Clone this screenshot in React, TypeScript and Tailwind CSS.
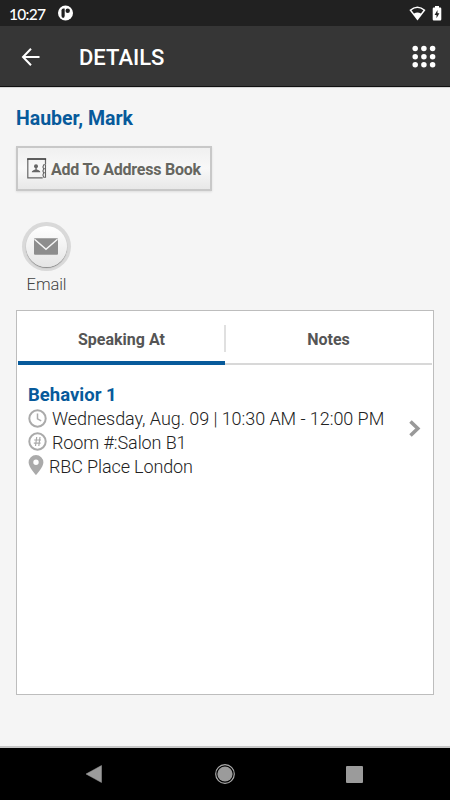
function StatusBar() {
  return (
    <div className="flex h-[26px] items-center bg-[#212121] pl-[9px] pr-[8px] text-white">
      <span className="w-[49px] pt-[2px] font-['Lato',sans-serif] text-[15.500px] font-medium leading-[20px] tracking-[-0.700px]">10:27</span>
      <svg className="h-4 w-4" viewBox="0 0 16 16">
        <circle cx="7.5" cy="8" r="7.5" fill="#fff" />
        <path d="M6.500 3.600H5.400Q3.500 3.600 3.500 5.500v5.300q0 2.100 1.600 2.100t1.600-2.100V3.600Z" fill="#212121" />
        <circle cx="9.700" cy="5.700" r="2.200" fill="#212121" />
      </svg>
      <div className="ml-auto flex items-center gap-[6px]">
        <svg className="h-[15px] w-[17px]" viewBox="0 0 17 15">
          <path d="M.4 4Q8.3-3 16.5 4L8.5 14.4Z" fill="#fff" />
          <path d="M2.500 4.300q5.900-4.500 11.900 0l-2.500 3.100q-3.400-2-6.900 0Z" fill="#212121" />
        </svg>
        <svg className="h-[15px] w-[10px]" viewBox="0 0 10 15">
          <path d="M3 0h4v1.5h1.2Q9.3 1.5 9.3 2.7v10.5q0 1.3-1.1 1.3H1.8Q.7 14.500.7 13.200V2.700Q.7 1.500 1.800 1.500H3Z" fill="#fff" />
          <path d="M5.500 4 2.600 8.900h1.900v3.300l2.900-4.900H5.500Z" fill="#212121" />
        </svg>
      </div>
    </div>
  );
}

const dots = [3.2, 11.9, 20.6];

function Header() {
  return (
    <header className="flex h-[61px] items-center border-b border-[#111] bg-[#363636] pl-[21px] pr-[14px] text-white">
      <svg className="mt-px h-5 w-[20px]" viewBox="0 0 20 20" fill="none" stroke="#fff" strokeWidth="2">
        <path d="M10 1.700 2 10l8 8.300M2 10h16.500" />
      </svg>
      <h1 className="ml-[38px] mt-[4px] text-[22px] font-medium leading-[26px]">DETAILS</h1>
      <svg className="ml-auto mt-[2px] h-6 w-6" viewBox="0 0 24 24" fill="#fff">
        {dots.map((y) => dots.map((x) => <circle key={`${x}-${y}`} cx={x} cy={3.5 + (y - 3.2) * 0.94} r="2.75" />))}
      </svg>
    </header>
  );
}

function AddressBookIcon() {
  return (
    <svg className="h-[21px] w-[20px]" viewBox="0 0 20 21" fill="none" stroke="#666" strokeWidth="1.200">
      <path d="M18.500 6V1H.8v18.900h14.900" />
      <path d="M.2 1h18.900" stroke="#333" strokeWidth="1.300" />
      <path d="M18.500 6.800h-1.800q-1.500 2 0 4-1.500 2 0 4-1.500 2 0 4.500h1.800ZM16.700 10.800h1.800M16.700 14.800h1.800" strokeWidth="1.100" />
      <circle cx="9" cy="8.200" r="2" fill="#666" stroke="none" />
      <path d="M4.800 14.200q0-1.600 3.600-2.600V9.500h1.300v2.100q3.600 1 3.600 2.600Z" fill="#666" stroke="none" />
    </svg>
  );
}

function EmailButton() {
  return (
    <div className="mt-[31px] ml-[5px] flex w-[50px] flex-col items-center">
      <div className="flex h-[49px] w-[49px] items-center justify-center rounded-full bg-[#d9d9d9]">
        <div className="flex h-[41px] w-[41px] items-center justify-center rounded-full bg-linear-to-b from-white to-[#e5e5e5] shadow-[0_1px_1px_#888]">
          <svg className="h-[17px] w-6" viewBox="0 0 24 17">
            <rect x="0" y=".3" width="24" height="16.400" rx="1" fill="#8d8d8d" />
            <path d="m.5 1.200 11.500 10L23.500 1.200" fill="none" stroke="#f5f5f5" strokeWidth="1.500" />
          </svg>
        </div>
      </div>
      <span className="ml-px mt-[4px] text-[16.500px] font-light leading-[20px] tracking-[-0.100px] text-[#444]">Email</span>
    </div>
  );
}

function Tabs() {
  return (
    <div className="mx-px flex h-[54px] text-[16px] font-bold leading-[20px] text-[#555]">
      <div className="relative w-[207px] border-b-4 border-[#075a9b] pt-[19px] text-center">
        Speaking At
        <span className="absolute -right-px top-[14px] h-[27px] w-[2px] bg-[#e0e0e0]" />
      </div>
      <div className="flex-1 border-b-2 border-[#d8d8d8] pt-[19px] text-center">Notes</div>
    </div>
  );
}

function SessionDetails() {
  return (
    <div className="flex pl-[11px] pr-[11px] pt-[19px]">
      <div className="flex-1 text-[18px] font-light leading-[24px] tracking-[-0.060px] text-[#222]">
        <h2 className="-mt-px mb-px h-[23px] text-[18.500px] font-bold tracking-normal text-[#075a9b]">Behavior 1</h2>
        <div className="flex h-[24px] items-center gap-[5px]">
          <svg className="mb-[2px] h-[19px] w-[19px] shrink-0" viewBox="0 0 19 19" fill="none" stroke="#aaa" strokeWidth="2">
            <circle cx="9.500" cy="9.500" r="8.200" />
            <path d="M9.500 4.500v5.400l3.700 2" strokeWidth="1.500" />
          </svg>
          <span className="whitespace-nowrap">Wednesday, Aug. 09 | 10:30 AM - 12:00 PM</span>
        </div>
        <div className="flex h-[23px] items-center gap-[5px]">
          <svg className="mb-[2px] h-[19px] w-[19px] shrink-0" viewBox="0 0 19 19" fill="none" stroke="#aaa" strokeWidth="2">
            <circle cx="9.500" cy="9.500" r="8.200" />
            <path d="M8.700 5 7.500 14M12 5l-1.200 9M6.200 8H13M5.800 11.200h6.800" strokeWidth="1.200" />
          </svg>
          <span className="tracking-[-0.100px]">Room #:Salon B1</span>
        </div>
        <div className="flex h-[24px] items-center gap-[5px]">
          <svg className="mb-[2px] h-5 w-4 shrink-0" viewBox="0 0 16 20">
            <path d="M8 0A7.400 7.400 0 0 0 .6 7.400C.6 12 8 20 8 20s7.400-8 7.400-12.600A7.400 7.400 0 0 0 8 0Zm0 4.500a2.700 2.700 0 1 1 0 5.400 2.700 2.700 0 0 1 0-5.400Z" fill="#aaa" fillRule="evenodd" />
          </svg>
          <span className="pt-px tracking-[-0.120px]">RBC Place London</span>
        </div>
      </div>
      <svg className="mt-[35px] h-[19px] w-[14px] shrink-0" viewBox="0 0 14 19" fill="none" stroke="#999" strokeWidth="3.600">
        <path d="m2.500 2.500 7.300 7-7.300 7" />
      </svg>
    </div>
  );
}

function NavigationBar() {
  return (
    <nav className="flex h-[52px] items-center justify-between bg-black pl-[86px] pr-[87px]">
      <svg className="h-[18px] w-4" viewBox="0 0 16 18"><path d="M15.500.500v17L0 9Z" fill="#9b9b9b" stroke="#9b9b9b" strokeLinejoin="round" strokeWidth=".5" /></svg>
      <svg className="ml-[2px] h-5 w-5" viewBox="0 0 20 20">
        <circle cx="10" cy="10" r="9.300" fill="none" stroke="#aaa" strokeWidth="1.200" />
        <circle cx="10" cy="10" r="7.600" fill="#9b9b9b" />
      </svg>
      <div className="h-[17px] w-[17px] rounded-[1px] bg-[#9b9b9b]" />
    </nav>
  );
}

export default function App() {
  return (
    <div className="flex h-[800px] w-[450px] flex-col overflow-hidden bg-[#f5f5f5] font-['Roboto',sans-serif]">
      <StatusBar />
      <Header />
      <main className="flex flex-1 flex-col border-b-2 border-t border-b-[#c6c6c6] border-t-[#d5d5d5] px-4 pt-[19px]">
        <h2 className="text-[19.500px] font-bold leading-[24px] text-[#075a9b]">Hauber, Mark</h2>
        <button className="mt-[15px] flex h-[45px] w-[196px] items-center gap-[4px] border-2 border-[#c8c8c8] bg-linear-to-b from-[#f0f0f0] via-[#f8f8f8] to-[#e8e8e8] pl-[9px] text-[16px] font-bold tracking-[-0.230px] text-[#666660] shadow-[0_1px_2px_#ddd]">
          <AddressBookIcon />
          <span className="mt-[2px] whitespace-nowrap">Add To Address Book</span>
        </button>
        <EmailButton />
        <section className="mt-[15px] h-[385px] w-[418px] border border-[#bdbdbd] bg-white">
          <Tabs />
          <SessionDetails />
        </section>
      </main>
      <NavigationBar />
    </div>
  );
}
